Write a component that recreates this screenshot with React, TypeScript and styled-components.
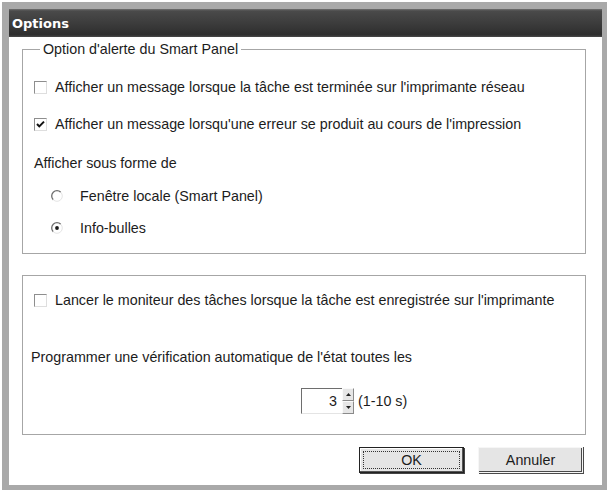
import styled, { createGlobalStyle } from "styled-components";

const GlobalStyle = createGlobalStyle`
  body {
    margin: 0;
    background: #fff;
    font-family: "Liberation Sans", Arial, sans-serif;
  }
`;

const FONT = "14.3px";

function Checkbox({ checked }: { checked?: boolean }) {
  return (
    <CheckBox>
      {checked && (
        <svg width="11" height="11" viewBox="0 0 11 11">
          <path d="M2 5 L4.3 7.4 L9 2.6" fill="none" stroke="#111" strokeWidth="2" />
        </svg>
      )}
    </CheckBox>
  );
}

function Radio({ checked }: { checked?: boolean }) {
  return (
    <RadioIcon width="12" height="12" viewBox="0 0 12 12">
      <circle cx="6" cy="6" r="5.3" fill="#fff" />
      <path d="M2.25 9.75 A5.3 5.3 0 0 1 9.75 2.25" fill="none" stroke="#6e6e6e" strokeWidth="1.3" />
      <path d="M9.75 2.25 A5.3 5.3 0 0 1 2.25 9.75" fill="none" stroke="#e4e4e4" strokeWidth="1" />
      {checked && <circle cx="6" cy="6" r="1.9" fill="#1a1a1a" />}
    </RadioIcon>
  );
}

function App() {
  return (
    <>
      <GlobalStyle />
      <Window>
        <TitleBar>Options</TitleBar>
        <Body>
          <Group $pb={15}>
            <Legend>Option d'alerte du Smart Panel</Legend>
            <Row $mt={20}>
              <Checkbox />
              <Label>Afficher un message lorsque la tâche est terminée sur l'imprimante réseau</Label>
            </Row>
            <Row $mt={17}>
              <Checkbox checked />
              <Label>Afficher un message lorsqu'une erreur se produit au cours de l'impression</Label>
            </Row>
            <Row $mt={19}>
              <Text>Afficher sous forme de</Text>
            </Row>
            <Row $mt={13} $indent={17}>
              <Radio />
              <Label $gap={17}>Fenêtre locale (Smart Panel)</Label>
            </Row>
            <Row $mt={12} $indent={17}>
              <Radio checked />
              <Label $gap={17}>Info-bulles</Label>
            </Row>
          </Group>

          <Group $pb={20} $mt={21}>
            <Row $mt={14}>
              <Checkbox />
              <Label>Lancer le moniteur des tâches lorsque la tâche est enregistrée sur l'imprimante</Label>
            </Row>
            <Row $mt={37} $indent={-3}>
              <Text>Programmer une vérification automatique de l'état toutes les</Text>
            </Row>
            <SpinRow>
              <SpinField>3</SpinField>
              <SpinButtons>
                <SpinButton>
                  <svg width="5" height="3" viewBox="0 0 5 3">
                    <path d="M0 3 L2.5 0 L5 3 Z" fill="#222" />
                  </svg>
                </SpinButton>
                <SpinButton>
                  <svg width="5" height="3" viewBox="0 0 5 3">
                    <path d="M0 0 L2.5 3 L5 0 Z" fill="#222" />
                  </svg>
                </SpinButton>
              </SpinButtons>
              <Text>(1-10 s)</Text>
            </SpinRow>
          </Group>

          <Buttons>
            <Button $default>
              <Focus $show>OK</Focus>
            </Button>
            <Button>
              <Focus>Annuler</Focus>
            </Button>
          </Buttons>
        </Body>
      </Window>
    </>
  );
}
export default App;

const Window = styled.div`
  box-sizing: border-box;
  width: 605px;
  height: 488px;
  margin: 2px 0 0 2px;
  border-style: solid;
  border-color: #a9a9a9;
  border-width: 7px 5px 5px 7px;
  background: #fff;
  display: flex;
  flex-direction: column;
`;

const TitleBar = styled.div`
  height: 28px;
  flex: none;
  display: flex;
  align-items: center;
  padding-left: 3px;
  background: linear-gradient(#707070 0, #4a4a4a 2px, #3e3e3e 45%, #2e2e2e 92%, #4a4a4a 100%);
  color: #fff;
  font-family: "DejaVu Sans", Verdana, sans-serif;
  font-weight: bold;
  font-size: 13px;
`;

const Body = styled.div`
  flex: 1;
  display: flex;
  flex-direction: column;
  padding: 4px 16px 0 13px;
`;

const Group = styled.fieldset<{ $pb: number; $mt?: number }>`
  margin: ${(p) => p.$mt ?? 0}px 0 0 0;
  padding: 0 0 ${(p) => p.$pb}px 11px;
  min-width: 0;
  border: 1px solid #a6a6a6;
  display: flex;
  flex-direction: column;
`;

const Legend = styled.legend`
  margin-left: 6px;
  padding: 0 3px;
  font-size: ${FONT};
  line-height: 16px;
  color: #1c1c1c;
`;

const Row = styled.div<{ $mt: number; $indent?: number }>`
  display: flex;
  align-items: center;
  height: 20px;
  margin-top: ${(p) => p.$mt}px;
  padding-left: ${(p) => Math.max(p.$indent ?? 0, 0)}px;
  margin-left: ${(p) => Math.min(p.$indent ?? 0, 0)}px;
`;

const Text = styled.span`
  font-size: ${FONT};
  color: #1c1c1c;
  white-space: nowrap;
`;

const Label = styled(Text)<{ $gap?: number }>`
  margin-left: ${(p) => p.$gap ?? 8}px;
`;

const CheckBox = styled.span`
  box-sizing: border-box;
  width: 13px;
  height: 13px;
  flex: none;
  display: flex;
  align-items: center;
  justify-content: center;
  background: #fff;
  border: 1px solid;
  border-color: #8e8e8e #dedede #dedede #8e8e8e;
`;

const RadioIcon = styled.svg`
  flex: none;
`;

const SpinRow = styled.div`
  display: flex;
  align-items: center;
  margin-top: 21px;
  padding-left: 267px;
  height: 26px;
`;

const SpinField = styled.div`
  box-sizing: border-box;
  width: 41px;
  height: 26px;
  display: flex;
  align-items: center;
  justify-content: flex-end;
  padding-right: 5px;
  font-size: ${FONT};
  color: #1c1c1c;
  background: #fff;
  border: 1px solid;
  border-color: #6e6e6e #e4e4e4 #e4e4e4 #6e6e6e;
  border-right: none;
`;

const SpinButtons = styled.div`
  display: flex;
  flex-direction: column;
  width: 12px;
  height: 26px;
  margin-right: 4px;
`;

const SpinButton = styled.div`
  box-sizing: border-box;
  flex: 1;
  display: flex;
  align-items: center;
  justify-content: center;
  background: #e6e6e6;
  border: 1px solid;
  border-color: #fafafa #8a8a8a #8a8a8a #fafafa;
`;

const Buttons = styled.div`
  display: flex;
  justify-content: flex-end;
  gap: 14px;
  margin-top: 12px;
  padding-right: 3px;
`;

const Button = styled.div<{ $default?: boolean }>`
  box-sizing: border-box;
  width: 105px;
  height: 26px;
  display: flex;
  padding: 3px;
  background: #e5e5e5;
  font-size: ${FONT};
  color: #1c1c1c;
  border: 1px solid;
  border-color: ${(p) => (p.$default ? "#222" : "#f6f6f6")};
  box-shadow: ${(p) =>
    p.$default
      ? "inset -1px -1px #555, inset 1px 1px #fff, 1px 1px #444"
      : "inset -1px -1px #4a4a4a, 1px 1px #4a4a4a, 1px 0 #4a4a4a"};
`;

const Focus = styled.span<{ $show?: boolean }>`
  flex: 1;
  display: flex;
  align-items: center;
  justify-content: center;
  border: 1px dotted ${(p) => (p.$show ? "#333" : "transparent")};
`;
